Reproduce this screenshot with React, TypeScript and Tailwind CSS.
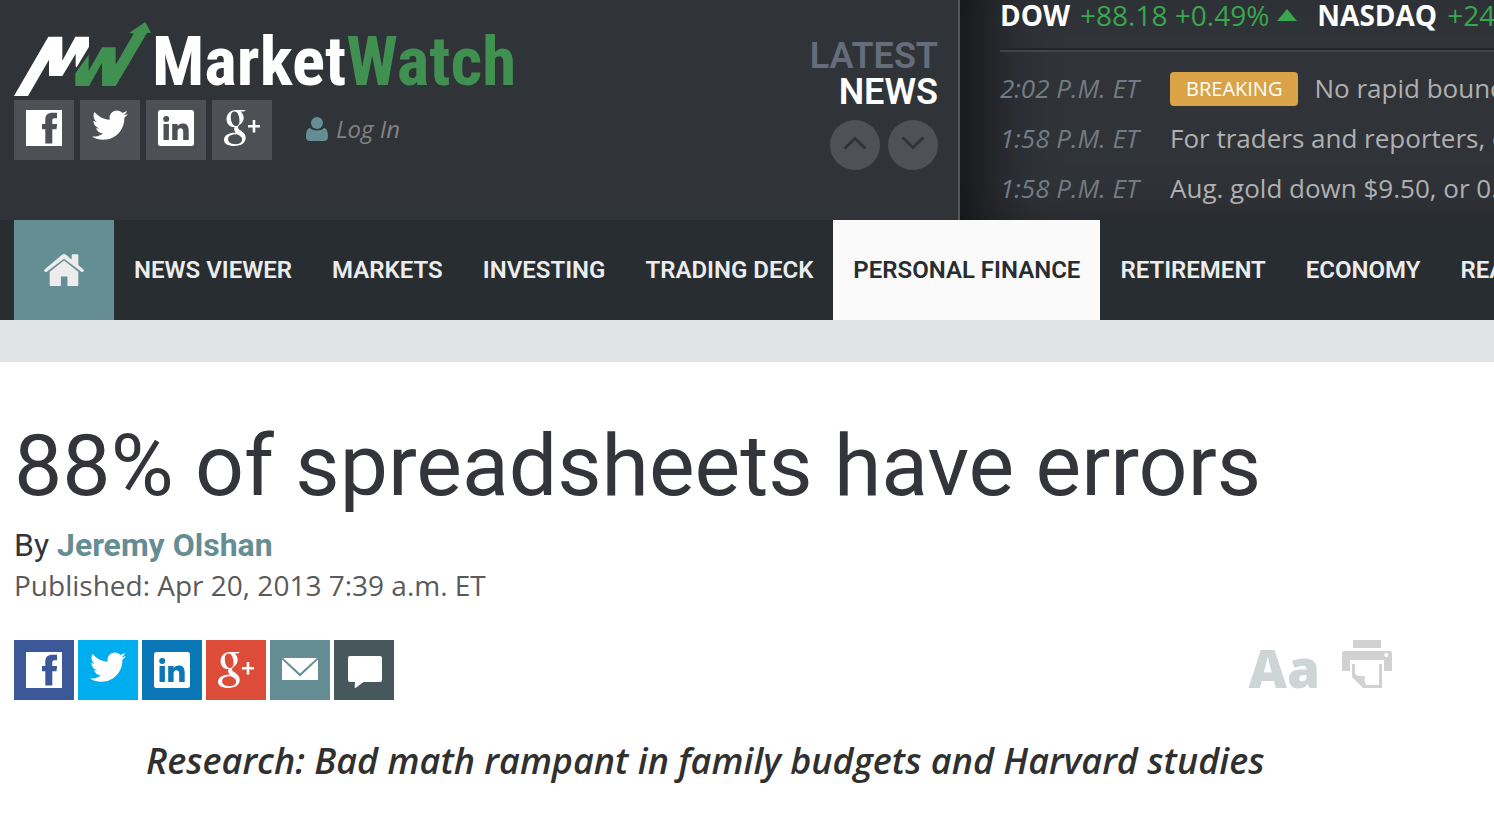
import React from "react";

const BIRD =
  "M459.37 151.716c.325 4.548.325 9.097.325 13.645 0 138.72-105.583 298.558-298.558 298.558-59.452 0-114.68-17.219-161.137-47.106 8.447.974 16.568 1.299 25.34 1.299 49.055 0 94.213-16.568 130.274-44.832-46.132-.975-84.792-31.188-98.112-72.772 6.498.974 12.995 1.624 19.818 1.624 9.421 0 18.843-1.3 27.614-3.573-48.081-9.747-84.143-51.98-84.143-102.985v-1.299c13.969 7.797 30.214 12.67 47.431 13.319-28.264-18.843-46.781-51.005-46.781-87.391 0-19.492 5.197-37.36 14.294-52.954 51.655 63.675 129.3 105.258 216.365 109.807-1.624-7.797-2.599-15.918-2.599-24.04 0-57.828 46.782-104.934 104.934-104.934 30.213 0 57.502 12.67 76.67 33.137 23.715-4.548 46.456-13.32 66.599-25.34-7.798 24.366-24.366 44.833-46.132 57.827 21.117-2.273 41.584-8.122 60.426-16.243-14.292 20.791-32.161 39.308-52.628 54.253z";

function FacebookIcon() {
  return (
    <svg viewBox="0 0 36 36" className="size-9" fill="currentColor" aria-hidden="true">
      <path
        fillRule="evenodd"
        d="M0 0h36v36H0zM19.3 33.5h7V19.3h4.2l.6-5.3h-4.8v-3.2c0-1.8.6-2.5 2.4-2.5H31V2.8h-4.4c-5 0-7.3 2.6-7.3 7V14H16v5.3h3.3z"
      />
    </svg>
  );
}

function TwitterIcon() {
  return (
    <svg viewBox="0 40 512 512" className="size-9" fill="currentColor" aria-hidden="true">
      <path d={BIRD} />
    </svg>
  );
}

function LinkedInIcon() {
  return (
    <svg viewBox="0 0 36 36" className="size-9" fill="currentColor" aria-hidden="true">
      <path
        fillRule="evenodd"
        d="M2.5 0h31A2.5 2.5 0 0 1 36 2.5v31a2.5 2.5 0 0 1-2.500 2.500h-31A2.5 2.5 0 0 1 0 33.500v-31A2.500 2.500 0 0 1 2.500 0zM5.500 14v16h5.400V14zM8.200 5.900a3 3 0 1 0 0 6 3 3 0 0 0 0-6zM14.200 14v16h5.400v-8.200c0-2.200.7-3.600 2.900-3.600 2.100 0 2.700 1.500 2.700 3.700V30h5.500v-9.200c0-4.600-1.600-7.200-5.900-7.200-2.600 0-4.200 1.200-5.200 2.700V14z"
      />
    </svg>
  );
}

function GooglePlusIcon() {
  return (
    <svg viewBox="0 0 36 36" className="size-9" fill="currentColor" aria-hidden="true">
      <path
        fillRule="evenodd"
        d="M11.500 0H22l-2.200 1.600h-3.300c2 1.500 3.200 3.700 3.200 6.300 0 3-1.600 5-3.600 6.600-1.500 1.200-2 1.900-2 2.900 0 1.100.9 1.900 2.200 2.900 3.300 2.400 5.400 4.100 5.400 7.700 0 4.400-4.200 8-11.300 8C4 36 0 33.700 0 30c0-4.600 5-7.200 12-7.400-1-.9-1.900-2-1.900-3.600 0-.7.200-1.300.5-1.900C5.600 17.300 2.500 13.700 2.500 9.300 2.500 4.200 6.500 0 11.500 0zM10.700 1.400C8.200 1.400 6.800 3.300 6.800 6.700c0 4.600 1.800 9.200 5.100 9.200 2.300 0 3.600-1.800 3.600-5 0-4.700-1.800-9.500-4.800-9.500zM13 24.200c-5.800 0-8.900 1.500-8.900 4.900 0 3.200 2.800 5.200 7.300 5.200 4.300 0 6.700-1.800 6.700-4.700 0-2.400-1.500-3.500-5.100-5.400z"
      />
      <path d="M28.700 10h2.600v4.900H36v2.600h-4.700v4.900h-2.600v-4.900H24v-2.600h4.700z" />
    </svg>
  );
}

function MailIcon() {
  return (
    <svg viewBox="0 0 36 36" className="size-9" fill="currentColor" aria-hidden="true">
      <path d="M1 6h34L18 21.500zM0 7.500L18 24.600 36 7.500V28H0z" />
    </svg>
  );
}

function CommentIcon() {
  return (
    <svg viewBox="0 0 36 36" className="size-9" fill="currentColor" aria-hidden="true">
      <path d="M4 4h30a2 2 0 0 1 2 2v22a2 2 0 0 1-2 2H17.500L9.500 36c-1.500.3-.5-3.500-.5-6H4a2 2 0 0 1-2-2V6a2 2 0 0 1 2-2z" />
    </svg>
  );
}

function LogoMark() {
  return (
    <svg viewBox="42 36 414 222" className="h-[74px] w-[138px] shrink-0" aria-hidden="true">
      <path
        fill="#fff"
        d="M42 258L145 80h42v72l39-72h41v30l-37 62-3-2v-39l-40 67h-40v-49L84 258z"
      />
      <path
        fill="#409151"
        d="M226 228v-38l40-55v48l40-71h41v52l54-93-13-3 48-32 17 32-12 1-94 159h-41v-70l-39 70z"
      />
    </svg>
  );
}

function HomeIcon() {
  return (
    <svg viewBox="0 0 40 32" className="h-8 w-10" fill="currentColor" aria-hidden="true">
      <path d="M20 0c.6 0 1.200.2 1.700.6l6 5V1.200c0-.7.4-1 1-1h4.600c.7 0 1 .4 1 1v9.900l4.900 4.200c.8.700.9 1.500.3 2.200s-1.500.8-2.200.2L20 4.800 2.800 17.700c-.8.600-1.600.5-2.200-.2-.6-.8-.5-1.600.3-2.200L18.300.6C18.800.2 19.400 0 20 0z" />
      <path d="M20 6.500l14.300 11.300v12.700c0 1-.5 1.500-1.500 1.500H23.400v-9.500h-6.500V32H7.200c-1 0-1.500-.5-1.500-1.500V17.800z" />
    </svg>
  );
}

function PrinterIcon() {
  return (
    <svg viewBox="0 0 50 48" className="h-12 w-[50px]" fill="#d1d1d1" aria-hidden="true">
      <path d="M11 0h28v8H11z" />
      <path
        fillRule="evenodd"
        d="M2 11h46a2 2 0 0 1 2 2v18h-8V20H8v11H0V13a2 2 0 0 1 2-2zM44.300 13a2 2 0 1 0 0 4 2 2 0 0 0 0-4z"
      />
      <path d="M10 24h3v10c2 2 5 2.500 10 2-1 4-.5 7 1.500 9H37V24h3v24H21L10 37z" />
    </svg>
  );
}

const headerSocial = [
  { label: "Facebook", icon: <FacebookIcon /> },
  { label: "Twitter", icon: <TwitterIcon /> },
  { label: "LinkedIn", icon: <LinkedInIcon /> },
  { label: "Google Plus", icon: <GooglePlusIcon /> },
];

const shareLinks = [
  { label: "Share on Facebook", color: "bg-[#3b5998]", icon: <FacebookIcon /> },
  { label: "Share on Twitter", color: "bg-[#00aeef]", icon: <TwitterIcon /> },
  { label: "Share on LinkedIn", color: "bg-[#0a77b7]", icon: <LinkedInIcon /> },
  { label: "Share on Google Plus", color: "bg-[#dd4c39]", icon: <GooglePlusIcon /> },
  { label: "Email", color: "bg-[#658d94]", icon: <MailIcon /> },
  { label: "Comments", color: "bg-[#47585d]", icon: <CommentIcon /> },
];

const sections = [
  "NEWS VIEWER",
  "MARKETS",
  "INVESTING",
  "TRADING DECK",
  "PERSONAL FINANCE",
  "RETIREMENT",
  "ECONOMY",
  "REAL ESTATE",
];

const headlines = [
  { time: "2:02 P.M. ET", text: "No rapid bounce", breaking: true },
  { time: "1:58 P.M. ET", text: "For traders and reporters, early", breaking: false },
  { time: "1:58 P.M. ET", text: "Aug. gold down $9.50, or 0.7%", breaking: false },
];

function Brand() {
  return (
    <div className="pl-3.5 pt-[22px]">
      <a href="#" className="flex h-[74px] items-start" aria-label="MarketWatch">
        <LogoMark />
        <span className="pt-1 font-['Liberation_Sans_Narrow','Roboto_Condensed','Roboto',sans-serif] text-[69px] leading-[72px] font-bold text-white">
          Market<span className="text-[#409151]">Watch</span>
        </span>
      </a>
      <div className="mt-1 flex items-start">
        <div className="flex gap-1.5">
          {headerSocial.map((s) => (
            <a key={s.label} href="#" aria-label={s.label} className="flex size-[60px] justify-center bg-[#4d5054] pt-2.5 text-white">
              {s.icon}
            </a>
          ))}
        </div>
        <a href="#" className="ml-[34px] flex h-14 items-center gap-2 pt-px text-2xl text-[#828282] italic">
          <svg viewBox="0 0 22 24" className="h-6 w-[22px]" fill="#658d94" aria-hidden="true">
            <circle cx="11" cy="6" r="6" />
            <path d="M4 11c2 1.800 4.300 2.500 7 2.500s5-.7 7-2.500c3 0 4 4.500 4 9 0 2.500-1.500 4-4 4H4c-2.500 0-4-1.500-4-4 0-4.500 1-9 4-9z" />
          </svg>
          Log In
        </a>
      </div>
    </div>
  );
}

function LatestNews() {
  return (
    <div className="flex flex-1 flex-col items-end pt-[38px] pr-5">
      <h2 className="text-right font-[Roboto,sans-serif] text-4xl leading-9 font-semibold text-[#656d7c]">
        LATEST
        <br />
        <span className="text-white">NEWS</span>
      </h2>
      <div className="mt-2.5 flex gap-2">
        <button aria-label="Previous headlines" className="flex size-[50px] justify-center rounded-full bg-[#505156] pt-4">
          <svg viewBox="0 0 24 14" className="h-3.5 w-6" fill="none" stroke="#303338" strokeWidth="3" aria-hidden="true">
            <path d="M1.500 12.500L12 2.500l10.500 10" />
          </svg>
        </button>
        <button aria-label="Next headlines" className="flex size-[50px] justify-center rounded-full bg-[#505156] pt-4">
          <svg viewBox="0 0 24 14" className="h-3.5 w-6" fill="none" stroke="#303338" strokeWidth="3" aria-hidden="true">
            <path d="M1.500 1.500L12 11.500l10.500-10" />
          </svg>
        </button>
      </div>
    </div>
  );
}

function Ticker() {
  return (
    <div className="w-[536px] shrink-0 overflow-hidden border-l-2 border-[#55565a] pl-10 whitespace-nowrap shadow-[inset_60px_-10px_70px_-40px_#101113]">
      <div className="flex h-12 items-center pb-[18px] text-[28px] text-[#3aa64f]">
        <b className="text-white">DOW</b>
        <span className="ml-2.5">+88.18 +0.49%</span>
        <svg viewBox="0 0 20 12" className="ml-2 h-3 w-5 shrink-0" fill="currentColor" aria-hidden="true">
          <path d="M10 0l10 12H0z" />
        </svg>
        <b className="ml-5 text-white">NASDAQ</b>
        <span className="ml-2.5">+24.07</span>
      </div>
      <div className="border-t-2 border-[#232529]">
        <ul className="border-t-2 border-[#434448] pt-3 text-[26px] leading-9 text-[#b0b0b0]">
          {headlines.map((h, i) => (
            <li key={i} className="flex h-[50px] items-start pt-1.5">
              <time className="w-[170px] shrink-0 text-[#737b84] italic">{h.time}</time>
              {h.breaking && (
                <span className="mt-0.5 mr-4 rounded bg-[#daa347] px-4 text-xl leading-[34px] text-white">BREAKING</span>
              )}
              <a href="#">{h.text}</a>
            </li>
          ))}
        </ul>
      </div>
    </div>
  );
}

export default function App() {
  return (
    <div className="min-h-screen overflow-x-hidden bg-white font-['Open_Sans',sans-serif]">
      <header>
        <div className="flex h-[220px] bg-[#303338]">
          <Brand />
          <LatestNews />
          <Ticker />
        </div>
        <nav className="flex h-[100px] overflow-hidden bg-[#282d31] pl-3.5 font-[Roboto,sans-serif] text-2xl font-semibold whitespace-nowrap text-[#ececec]">
          <a href="#" aria-label="Home" className="flex w-[100px] shrink-0 items-center justify-center bg-[#658d94]">
            <HomeIcon />
          </a>
          {sections.map((s) => (
            <a
              key={s}
              href="#"
              className={
                s === "PERSONAL FINANCE"
                  ? "flex shrink-0 items-center bg-[#fafafa] px-5 text-[#282d31]"
                  : "flex shrink-0 items-center px-5"
              }
            >
              {s}
            </a>
          ))}
        </nav>
        <div className="h-[42px] bg-[#e0e4e4]" />
      </header>
      <main className="px-3.5 pt-[52px]">
        <h1 className="font-[Roboto,sans-serif] text-[86px] leading-[104px] whitespace-nowrap text-[#33353b]">
          88% of spreadsheets have errors
        </h1>
        <p className="mt-1 font-[Roboto,sans-serif] text-[32px] leading-[46px] text-[#33353b]">
          By{" "}
          <a href="#" className="font-bold text-[#658d94]">
            Jeremy Olshan
          </a>
        </p>
        <p className="text-[28px] leading-[34px] text-[#5a5a5a]">Published: Apr 20, 2013 7:39 a.m. ET</p>
        <div className="mt-[38px] flex items-start justify-between pr-[88px]">
          <div className="flex gap-1">
            {shareLinks.map((s) => (
              <a key={s.label} href="#" aria-label={s.label} className={"flex size-[60px] justify-center pt-3 text-white " + s.color}>
                {s.icon}
              </a>
            ))}
          </div>
          <div className="flex items-start gap-[22px]">
            <button aria-label="Text size" className="text-[53px] leading-[56px] font-extrabold text-[#ced5d5]">
              Aa
            </button>
            <button aria-label="Print">
              <PrinterIcon />
            </button>
          </div>
        </div>
        <p className="mt-9 pl-[132px] text-4xl leading-[50px] font-semibold whitespace-nowrap text-[#303030] italic">
          Research: Bad math rampant in family budgets and Harvard studies
        </p>
      </main>
    </div>
  );
}
